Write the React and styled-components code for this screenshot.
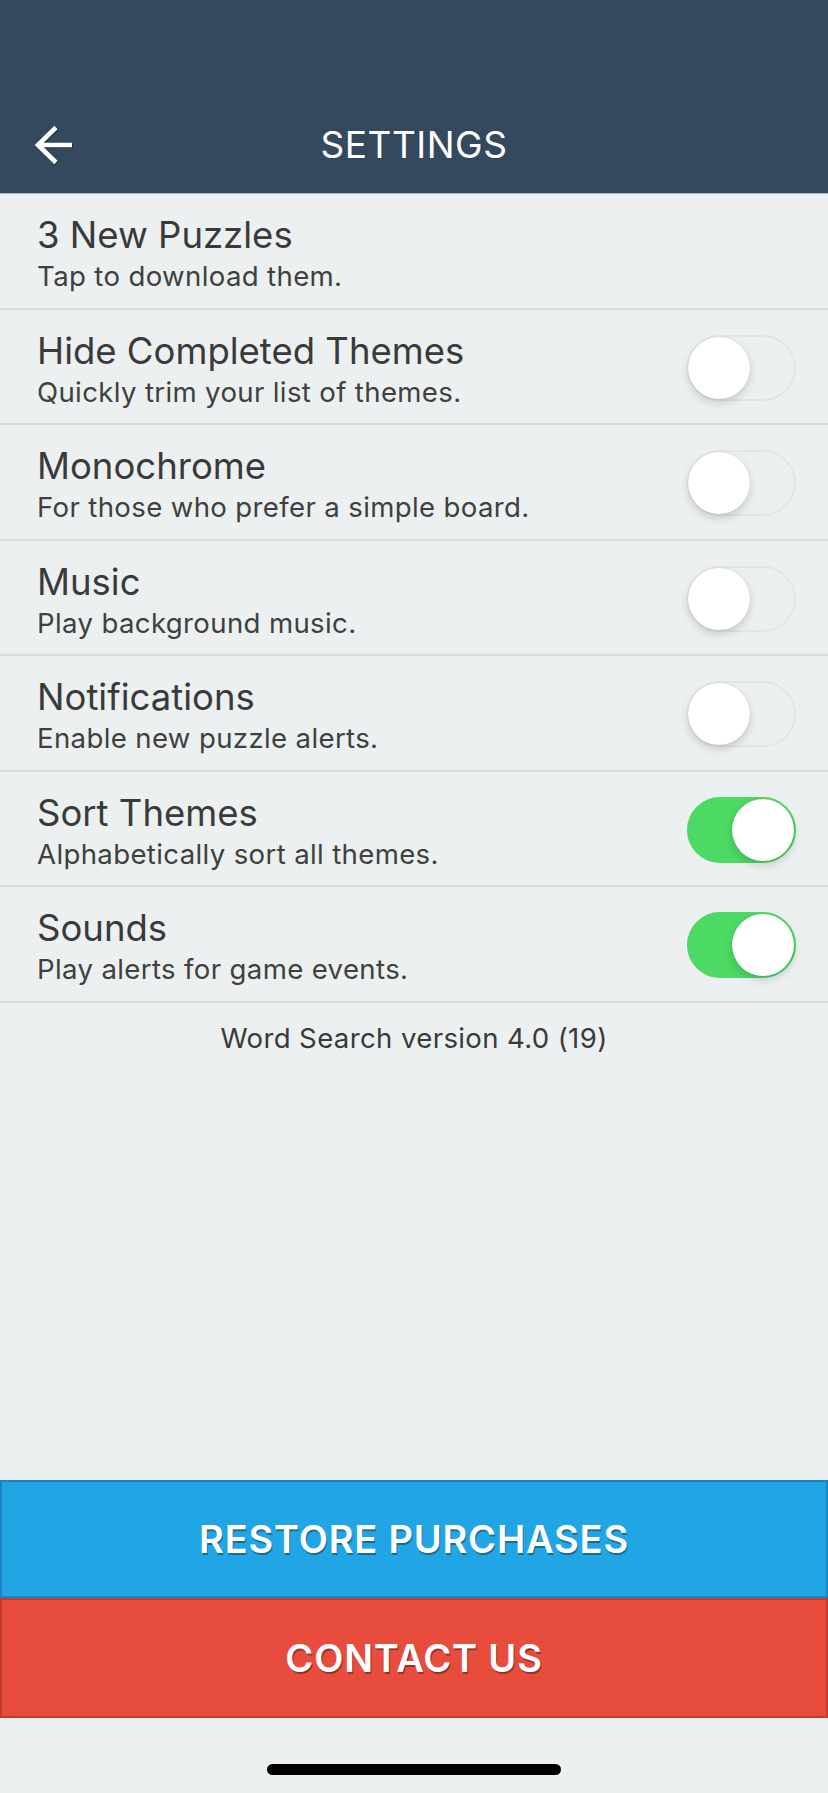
import React, { useState } from "react";
import styled, { createGlobalStyle } from "styled-components";

const GlobalStyle = createGlobalStyle`
  html, body {
    margin: 0;
    padding: 0;
    background: #ecf0f1;
  }
  body {
    font-family: Inter, "Liberation Sans", sans-serif;
    -webkit-font-smoothing: antialiased;
  }
  * {
    box-sizing: border-box;
  }
`;

const settingsList = [
  { id: "puzzles", title: "3 New Puzzles", sub: "Tap to download them." },
  { id: "hide", title: "Hide Completed Themes", sub: "Quickly trim your list of themes.", on: false },
  { id: "mono", title: "Monochrome", sub: "For those who prefer a simple board.", on: false },
  { id: "music", title: "Music", sub: "Play background music.", on: false },
  { id: "notify", title: "Notifications", sub: "Enable new puzzle alerts.", on: false },
  { id: "sort", title: "Sort Themes", sub: "Alphabetically sort all themes.", on: true },
  { id: "sounds", title: "Sounds", sub: "Play alerts for game events.", on: true },
];

const Toggle = ({ initial }) => {
  const [on, setOn] = useState(initial);
  return (
    <Track $on={on} onClick={() => setOn((v) => !v)} aria-pressed={on}>
      <Knob $on={on} />
    </Track>
  );
};

const App = () => {
  return (
    <Page>
      <GlobalStyle />
      <Header>
        <BackButton aria-label="Back">
          <svg width="40" height="40" viewBox="0 0 40 40" fill="none">
            <path
              d="M38 20H4M22 2.5L4 20l18 17.5"
              stroke="#fff"
              strokeWidth="4.6"
              strokeLinecap="butt"
              strokeLinejoin="miter"
            />
          </svg>
        </BackButton>
        <Title>SETTINGS</Title>
        <span />
      </Header>

      <List>
        {settingsList.map((item) => (
          <Row key={item.id}>
            <TextBlock>
              <RowTitle>{item.title}</RowTitle>
              <RowSub>{item.sub}</RowSub>
            </TextBlock>
            {item.on !== undefined && <Toggle initial={item.on} />}
          </Row>
        ))}
      </List>

      <Version>Word Search version 4.0 (19)</Version>

      <Actions>
        <ActionButton $bg="#21a5e4" $edge="#1a86bf" $h="118px">
          RESTORE PURCHASES
        </ActionButton>
        <ActionButton $bg="#e74c3c" $edge="#c23b2d" $h="120px">
          CONTACT US
        </ActionButton>
      </Actions>

      <HomeArea>
        <HomeBar />
      </HomeArea>
    </Page>
  );
};

const Page = styled.div`
  min-height: 100vh;
  display: flex;
  flex-direction: column;
  background: #ecf0f1;
`;

const Header = styled.header`
  height: 194px;
  padding-top: 96px;
  background: #34495e;
  border-bottom: 1px solid #aab7c0;
  display: grid;
  grid-template-columns: 110px 1fr 110px;
  align-items: center;
`;

const BackButton = styled.button`
  background: transparent;
  border: none;
  padding: 0 0 0 34px;
  display: flex;
  align-items: center;
  cursor: pointer;
  svg {
    filter: drop-shadow(1px 1px 0 rgba(0, 0, 0, 0.35));
  }
`;

const Title = styled.h1`
  margin: 0;
  text-align: center;
  color: #fff;
  font-size: 37px;
  font-weight: 400;
  letter-spacing: 0.5px;
`;

const List = styled.div`
  display: flex;
  flex-direction: column;
`;

const Row = styled.div`
  height: 115.5px;
  padding: 0 32px 0 37px;
  display: flex;
  align-items: center;
  justify-content: space-between;
  border-bottom: 2px solid #d8dcdd;
`;

const TextBlock = styled.div`
  align-self: flex-start;
  padding-top: 21px;
  color: #3a3a3a;
`;

const RowTitle = styled.div`
  font-size: 36.5px;
  line-height: 41px;
  font-weight: 400;
`;

const RowSub = styled.div`
  font-size: 27.6px;
  line-height: 40px;
  letter-spacing: 0.35px;
  color: #404040;
`;

const Track = styled.button`
  position: relative;
  flex-shrink: 0;
  margin-top: 3px;
  width: 109px;
  height: 66px;
  padding: 0;
  border-radius: 33px;
  border: 2px solid ${(p) => (p.$on ? "#4cd964" : "#e2e6e7")};
  background: ${(p) => (p.$on ? "#4cd964" : "#ecf0f1")};
  cursor: pointer;
`;

const Knob = styled.span`
  position: absolute;
  top: 0;
  left: ${(p) => (p.$on ? "43px" : "-1px")};
  width: 62px;
  height: 62px;
  border-radius: 50%;
  background: #fff;
  box-shadow: 0 4px 9px rgba(0, 0, 0, 0.16), 0 0 1px rgba(0, 0, 0, 0.18);
`;

const Version = styled.div`
  padding-top: 17px;
  text-align: center;
  font-size: 27.6px;
  line-height: 36px;
  letter-spacing: 0.35px;
  color: #3a3a3a;
`;

const Actions = styled.div`
  margin-top: auto;
  display: flex;
  flex-direction: column;
`;

const ActionButton = styled.button`
  display: block;
  width: 100%;
  height: ${(p) => p.$h};
  background: ${(p) => p.$bg};
  border: 2px solid ${(p) => p.$edge};
  color: #fff;
  font-family: Inter, "Liberation Sans", sans-serif;
  font-size: 38px;
  font-weight: 600;
  letter-spacing: 0.8px;
  text-shadow: 1px 2px 0 rgba(0, 0, 0, 0.35);
  cursor: pointer;
`;

const HomeArea = styled.div`
  height: 75px;
  padding-top: 46px;
  display: flex;
  justify-content: center;
`;

const HomeBar = styled.div`
  width: 294px;
  height: 11px;
  border-radius: 6px;
  background: #000;
`;

export default App;
